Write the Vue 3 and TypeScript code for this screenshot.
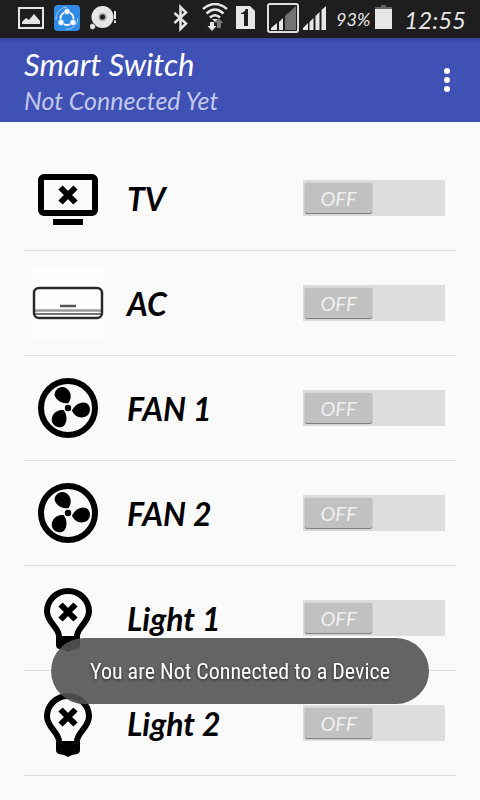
<script setup lang="ts">
import { reactive } from 'vue'

type IconKind = 'tv' | 'ac' | 'fan' | 'light'

interface Device {
  id: string
  name: string
  icon: IconKind
  on: boolean
}

const devices = reactive<Device[]>([
  { id: 'tv', name: 'TV', icon: 'tv', on: false },
  { id: 'ac', name: 'AC', icon: 'ac', on: false },
  { id: 'fan-1', name: 'FAN 1', icon: 'fan', on: false },
  { id: 'fan-2', name: 'FAN 2', icon: 'fan', on: false },
  { id: 'light-1', name: 'Light 1', icon: 'light', on: false },
  { id: 'light-2', name: 'Light 2', icon: 'light', on: false },
])

const bladeAngles: number[] = [0, 120, 240]
</script>

<template>
  <div class="screen">
    <div class="status-bar">
      <div class="notifications">
        <svg width="26" height="26" viewBox="0 0 26 26" aria-hidden="true">
          <rect x="1" y="3" width="24" height="20" fill="none" stroke="#e6e6e6" stroke-width="2" />
          <path d="M4 19v-2l4-4 3 2 5-6 6 7v3z" fill="#e6e6e6" />
        </svg>
        <svg width="26" height="26" viewBox="0 0 26 26" aria-hidden="true">
          <rect width="26" height="26" rx="4" fill="#2f8ae6" />
          <path d="M2 15A11.500 11.500 0 0 1 13 2M24 13A11.500 11.500 0 0 1 12 24.500" fill="none" stroke="#9cc9f5" stroke-width="1" />
          <circle cx="13" cy="13.500" r="6.500" fill="none" stroke="#fff" stroke-width="1.800" />
          <g fill="#fff" stroke="#2f8ae6" stroke-width=".6">
            <circle cx="13" cy="6.500" r="3" />
            <circle cx="7" cy="17.500" r="3" />
            <circle cx="19" cy="17.500" r="3" />
          </g>
        </svg>
        <svg width="26" height="26" viewBox="0 0 26 26" aria-hidden="true">
          <circle cx="12.500" cy="12" r="11" fill="#e6e6e6" />
          <circle cx="12.500" cy="12" r="4" fill="#a5a5a5" />
          <circle cx="12.500" cy="12" r="2.500" fill="#1e1e1e" />
          <circle cx="2.500" cy="21.500" r="3" fill="#e6e6e6" stroke="#1e1e1e" stroke-width=".6" />
          <path d="M25 6v8M25 15.500v2.500" stroke="#e6e6e6" stroke-width="2" />
        </svg>
      </div>
      <div class="indicators">
        <svg width="16" height="32" viewBox="0 0 16 32" aria-hidden="true">
          <path d="M1.500 10 13 20.500 7.500 26V4L13 9.500 1.500 20" fill="none" stroke="#e6e6e6" stroke-width="2.500" />
        </svg>
        <svg class="wifi" width="26" height="32" viewBox="0 0 26 32" aria-hidden="true">
          <g fill="none" stroke="#e6e6e6" stroke-width="2.500">
            <path d="M1 6Q13-4 25 6" />
            <path d="M4.500 10.500Q13 2.500 21.500 10.500" />
            <path d="M8 14.500Q13 10 18 14.500" />
          </g>
          <path d="M10 16h6L13 19z" fill="#e6e6e6" />
          <path d="M8 19h4v4h2.500L10 28l-4.500-5H8z" fill="#e6e6e6" />
          <path d="M15 25v-5h-2.500L17 15.500l4.500 4.500H19v5z" fill="#777" />
        </svg>
        <svg class="sim" width="19" height="32" viewBox="0 0 19 32" aria-hidden="true">
          <path d="M0 3h14l5 5v18H0z" fill="#e6e6e6" />
          <path d="M5 10q4-1 4.500-4H12v17H8V11H5z" fill="#1e1e1e" />
        </svg>
        <svg class="boxed-signal" width="32" height="32" viewBox="0 0 32 32" aria-hidden="true">
          <rect x="1" y="1" width="30" height="28" rx="2" fill="none" stroke="#dedede" stroke-width="2" />
          <path d="M4 27v-2l6-5v7zM12 27v-8l4-4v12z" fill="#e6e6e6" />
          <path d="M18 27V13L29 3v24z" fill="#737373" />
        </svg>
        <svg width="25" height="32" viewBox="0 0 25 32" aria-hidden="true">
          <path d="M0 27v-2l5-5v7zM6.500 27v-8l4-4v12zM12.500 27V13l4-4v18zM18.500 27V7l4.500-4v24z" fill="#e6e6e6" />
        </svg>
        <span class="percent">93%</span>
        <svg class="battery" width="17" height="32" viewBox="0 0 17 32" aria-hidden="true">
          <path d="M6 2h5v2h6v3H0V4h6z" fill="#626262" />
          <path d="M0 6h17v20H0z" fill="#e6e6e6" />
        </svg>
        <span class="clock">12:55</span>
      </div>
    </div>

    <header class="app-bar">
      <div class="titles">
        <h1>Smart Switch</h1>
        <p>Not Connected Yet</p>
      </div>
      <button class="more" type="button" aria-label="More options">
        <svg width="6" height="24" viewBox="0 0 6 24" aria-hidden="true">
          <circle cx="3" cy="3" r="3" />
          <circle cx="3" cy="12" r="3" />
          <circle cx="3" cy="21" r="3" />
        </svg>
      </button>
    </header>

    <main>
      <ul class="devices">
        <li v-for="device in devices" :key="device.id">
          <svg v-if="device.icon === 'tv'" class="icon" viewBox="0 0 72 72" aria-hidden="true">
            <rect x="9" y="15" width="54" height="36" rx="3" fill="none" stroke="#000" stroke-width="6" />
            <path d="m28.500 25.500 15 15m0-15-15 15" stroke="#000" stroke-width="6" />
            <path d="M21 57h30v6H21z" />
          </svg>
          <svg v-else-if="device.icon === 'ac'" class="icon" viewBox="0 0 72 72" aria-hidden="true">
            <rect width="72" height="72" fill="#fdfdfd" />
            <path d="M3 43.500h66" stroke="#999" stroke-width="2.500" />
            <path d="M3 47h66" stroke="#444" stroke-width="1.500" />
            <rect x="2" y="21" width="68" height="30" rx="5" fill="none" stroke="#2a2a2a" stroke-width="2.500" />
            <path d="M28 39h16" stroke="#555" stroke-width="2.500" />
          </svg>
          <svg v-else-if="device.icon === 'fan'" class="icon" viewBox="0 0 72 72" aria-hidden="true">
            <circle cx="36" cy="36" r="27" fill="none" stroke="#000" stroke-width="6" />
            <circle cx="36" cy="36" r="3.200" />
            <path
              v-for="angle in bladeAngles"
              :key="angle"
              :transform="`rotate(${angle} 36 36)`"
              d="M40 38.500C42 34.500 46 30.500 51.500 30.500C55.500 30.500 58 34 58 37.500C58 42.500 54 45.500 49.500 45.500C45 45.500 41 42 40 38.500Z"
            />
          </svg>
          <svg v-else class="icon" viewBox="0 0 72 72" aria-hidden="true">
            <path d="M27 56V54C27 46 15 40 15 29.500A21 20.500 0 0 1 57 29.500C57 40 45 46 45 54V56" fill="none" stroke="#000" stroke-width="6" />
            <path d="M24 54h24v9q0 3-3 4l-5 1-4 2-4-2-5-1q-3-1-3-4z" />
            <path d="m28.500 22.500 15 15m0-15-15 15" stroke="#000" stroke-width="6" />
          </svg>
          <label class="name" :for="device.id">{{ device.name }}</label>
          <span class="switch">
            <input :id="device.id" v-model="device.on" type="checkbox" role="switch" />
            <span class="thumb" aria-hidden="true">{{ device.on ? 'ON' : 'OFF' }}</span>
          </span>
        </li>
      </ul>
    </main>

    <div class="toast" role="status">You are Not Connected to a Device</div>
  </div>
</template>

<style>
body {
  background: #fafafa;
}
</style>

<style scoped>
.screen {
  min-height: 100vh;
  background: #fafafa;
  color: #000;
  font-family: "Choco cooky", Lato, "Open Sans", sans-serif;
  font-style: italic;
}

.status-bar {
  display: flex;
  justify-content: space-between;
  height: 38px;
  padding: 0 14px 0 18px;
  background: #1e1e1e;
  color: #e6e6e6;
}

.notifications {
  display: flex;
  align-items: center;
  gap: 10px;
  padding-bottom: 2px;
}

.indicators {
  display: flex;
  align-items: center;
  gap: 8px;
}

.wifi {
  margin-left: 5px;
}

.boxed-signal {
  margin: 0 -4px 0 4px;
}

.percent {
  font-size: 18px;
}

.battery {
  margin-left: -3px;
}

.clock {
  margin-left: 4px;
  font-size: 24px;
}

.app-bar {
  display: flex;
  align-items: center;
  justify-content: space-between;
  height: 84px;
  padding: 0 20px 0 24px;
  background: linear-gradient(#35439a, #3f51b5 4px);
  color: #fff;
}

.titles {
  padding-top: 4px;
}

h1 {
  margin: 0;
  font-size: 31px;
  font-weight: 400;
  line-height: 36px;
}

.titles p {
  margin: 0;
  color: #c2c8ea;
  font-size: 25px;
  line-height: 36px;
}

.more {
  display: flex;
  padding: 10px;
  border: 0;
  background: none;
}

.more svg {
  fill: #fff;
}

.devices {
  margin: 0;
  padding: 24px 24px 0;
  list-style: none;
}

li {
  display: flex;
  align-items: center;
  box-sizing: border-box;
  height: 105px;
  padding: 0 11px 0 8px;
  border-bottom: 1px solid #dedede;
}

.icon {
  flex: none;
  width: 72px;
  height: 72px;
}

.name {
  flex: 1;
  padding-left: 23px;
  font-size: 32px;
  font-weight: 700;
}

.switch {
  display: grid;
  box-sizing: border-box;
  width: 142px;
  height: 36px;
  padding: 3px 2px;
  background: #ddd;
}

.switch input {
  grid-area: 1 / 1;
  width: 100%;
  height: 100%;
  margin: 0;
  opacity: 0;
}

.thumb {
  grid-area: 1 / 1;
  justify-self: start;
  width: 67px;
  border-radius: 2px;
  background: #c1c1c1;
  box-shadow: 0 1px 1px #777, 0 0 1px #999;
  color: #f0f0f0;
  font-size: 20px;
  line-height: 30px;
  text-align: center;
  pointer-events: none;
}

.switch input:checked + .thumb {
  justify-self: end;
}

.toast {
  position: fixed;
  bottom: 96px;
  left: 50%;
  box-sizing: border-box;
  padding: 19px 39px 17px;
  transform: translateX(-50%);
  border-radius: 33px;
  background: rgba(83, 83, 83, 0.9);
  color: #fff;
  font-family: "Roboto Condensed", Roboto, sans-serif;
  font-size: 22px;
  font-style: normal;
  line-height: 30px;
  text-shadow: 0 1px 3px #222;
  white-space: nowrap;
}
</style>
